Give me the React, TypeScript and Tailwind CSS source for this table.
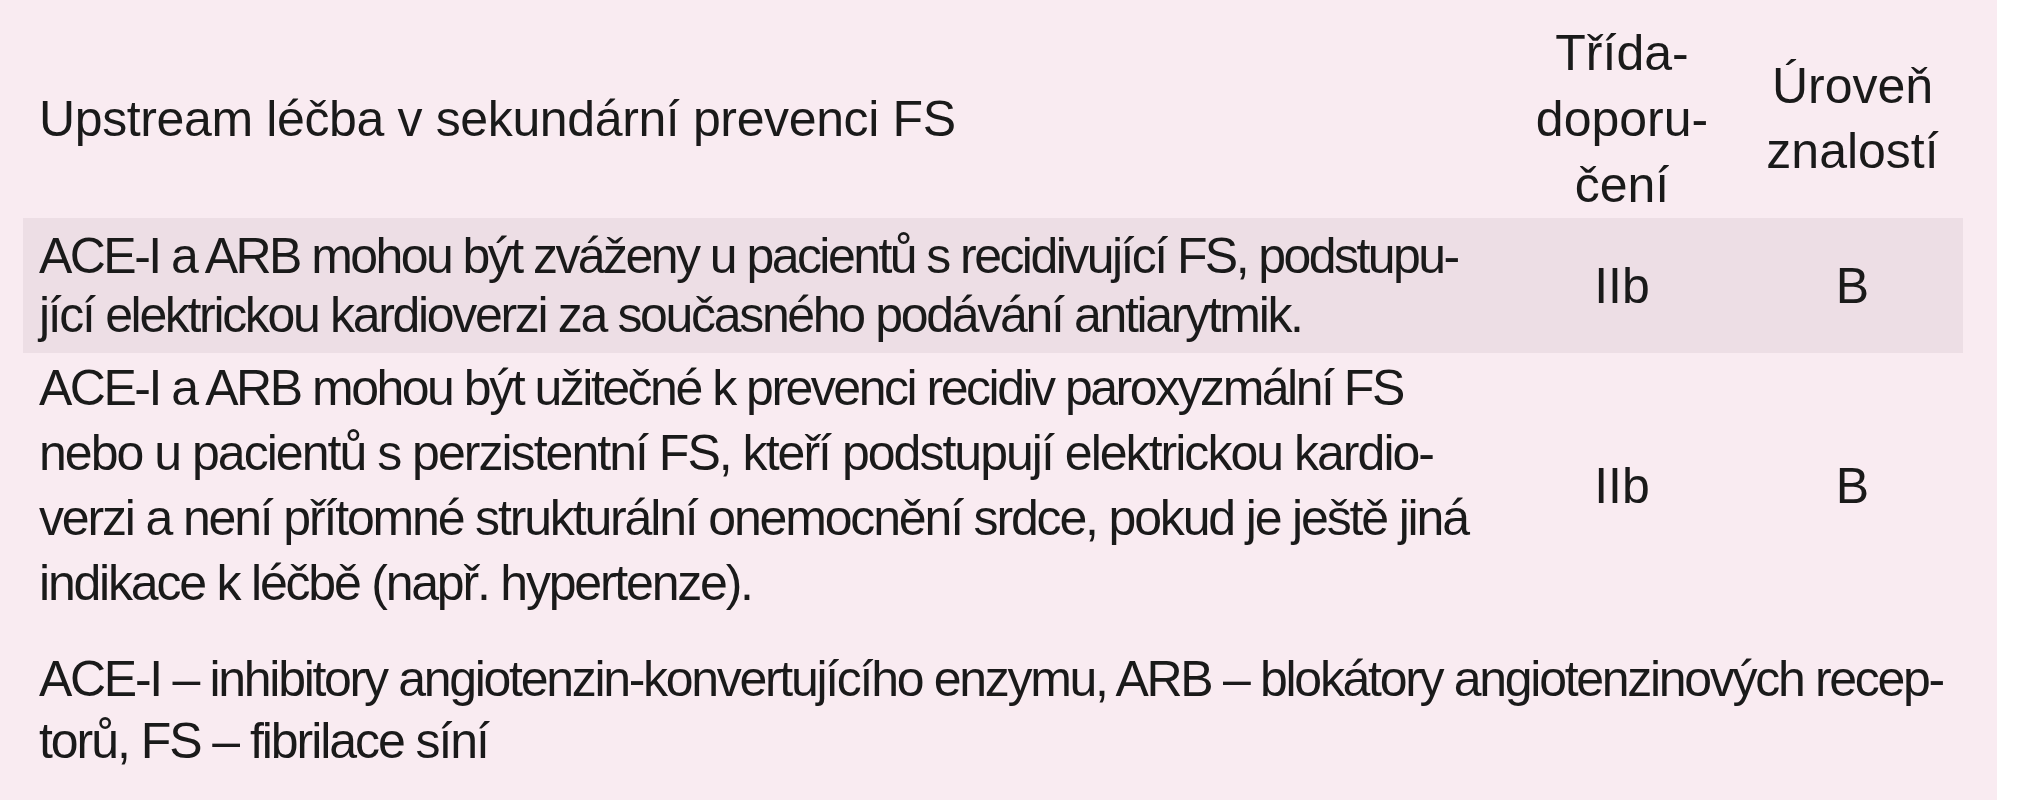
import React, { useMemo } from "react";

const FAMILY = '"Liberation Sans", Arial, sans-serif';
const LEFT = 39;

let ctx: CanvasRenderingContext2D | null = null;
function measure(text: string, size: number) {
  if (!ctx) ctx = document.createElement("canvas").getContext("2d");
  if (!ctx) return 0;
  ctx.font = `${size}px ${FAMILY}`;
  return ctx.measureText(text).width;
}

// řádek sazby stažený na šířku jako v předloze (konec řádku = end)
function Line({ text, end, size = 50 }: { text: string; end: number; size?: number }) {
  const ls = useMemo(() => {
    const n = Array.from(text).length;
    const w = measure(text, size);
    return n > 1 ? (end - LEFT - w) / (n - 1) : 0;
  }, [text, end, size]);
  return (
    <div className="whitespace-nowrap" style={{ letterSpacing: `${ls}px` }}>
      {text}
    </div>
  );
}

const row1 = [
  { t: "ACE-I a ARB mohou být zváženy u pacientů s recidivující FS, podstupu-", end: 1463 },
  { t: "jící elektrickou kardioverzi za současného podávání antiarytmik.", end: 1304 },
];

const row2 = [
  { t: "ACE-I a ARB mohou být užitečné k prevenci recidiv paroxyzmální FS", end: 1408 },
  { t: "nebo u pacientů s perzistentní FS, kteří podstupují elektrickou kardio-", end: 1435 },
  { t: "verzi a není přítomné strukturální onemocnění srdce, pokud je ještě jiná", end: 1470 },
  { t: "indikace k léčbě (např. hypertenze).", end: 754 },
];

const note = [
  { t: "ACE-I – inhibitory angiotenzin-konvertujícího enzymu, ARB – blokátory angiotenzinových recep-", end: 1948 },
  { t: "torů, FS – fibrilace síní", end: 490 },
];

function App() {
  return (
    <div className="flex w-full h-[800px] bg-white overflow-hidden" style={{ fontFamily: FAMILY }}>
      <div className="shrink-0 w-[1997px] h-[800px] bg-[#f9ebf1] text-[#1a1a1a] text-[50px] pl-[23px]">
        <div className="w-[1940px]">
          {/* hlavička tabulky */}
          <div className="grid grid-cols-[1497px_204px_239px] items-center pt-[20px] leading-[66px]">
            <div className="pl-[16px]">
              <Line text="Upstream léčba v sekundární prevenci FS" end={956} />
            </div>
            <div className="text-center">
              Třída-
              <br />
              doporu-
              <br />
              čení
            </div>
            <div className="text-center pl-[18px] leading-[65px]">
              Úroveň
              <br />
              znalostí
            </div>
          </div>

          {/* doporučení 1 */}
          <div className="grid grid-cols-[1497px_204px_239px] items-center pt-[9px] pb-[8px] leading-[59px] bg-[#eddee5]">
            <div className="pl-[16px]">
              {row1.map((l) => (
                <Line key={l.t} text={l.t} end={l.end} />
              ))}
            </div>
            <div className="text-center">IIb</div>
            <div className="text-center pl-[18px]">B</div>
          </div>

          {/* doporučení 2 */}
          <div className="grid grid-cols-[1497px_204px_239px] items-center pt-[3px] leading-[65px]">
            <div className="pl-[16px]">
              {row2.map((l) => (
                <Line key={l.t} text={l.t} end={l.end} />
              ))}
            </div>
            <div className="text-center">IIb</div>
            <div className="text-center pl-[18px]">B</div>
          </div>
        </div>

        {/* vysvětlivky */}
        <div className="mt-[32px] pl-[16px] leading-[62px]">
          {note.map((l) => (
            <Line key={l.t} text={l.t} end={l.end} />
          ))}
        </div>
      </div>
    </div>
  );
}

export default App;
